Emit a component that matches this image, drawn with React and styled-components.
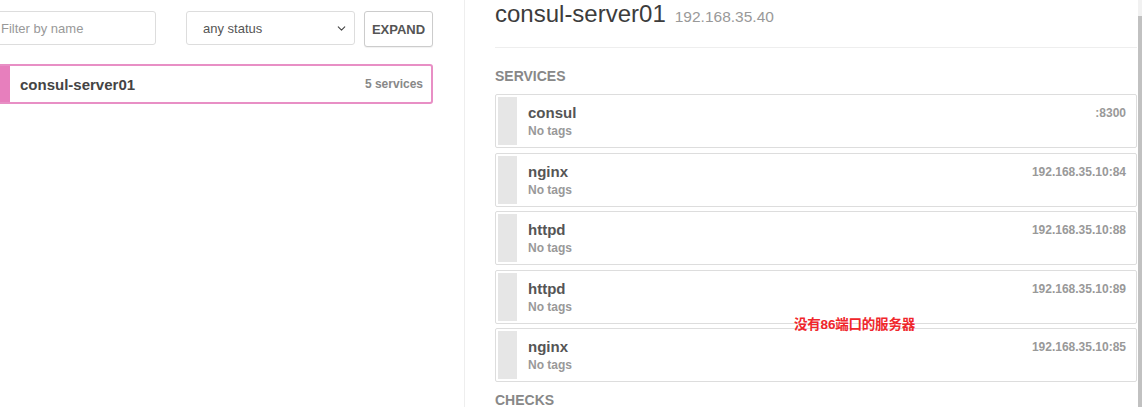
import styled, { createGlobalStyle } from 'styled-components';
import { ChevronDown } from 'lucide-react';

const GlobalStyle = createGlobalStyle`
  html, body {
    margin: 0;
    padding: 0;
    background: #fff;
    font-family: 'Liberation Sans', Arial, sans-serif;
    overflow: hidden;
  }
`;

const services = [
  { name: 'consul', address: ':8300' },
  { name: 'nginx', address: '192.168.35.10:84' },
  { name: 'httpd', address: '192.168.35.10:88' },
  { name: 'httpd', address: '192.168.35.10:89' },
  { name: 'nginx', address: '192.168.35.10:85' },
];

const Page = styled.div`
  display: flex;
  height: 407px;
  overflow: hidden;
`;

const LeftPanel = styled.div`
  width: 478px;
  flex-shrink: 0;
  margin-left: -13px;
  border-right: 1px solid #eee;
  box-sizing: border-box;
  padding: 11px 30px 0 0;
`;

const Toolbar = styled.div`
  display: grid;
  grid-template-columns: 169px 169px 69px;
  align-items: start;
  & > :nth-child(2) { margin-left: 30px; width: 169px; }
  & > :nth-child(3) { margin-left: 39px; }
`;

const FilterInput = styled.input`
  box-sizing: border-box;
  height: 34px;
  width: 169px;
  border: 1px solid #ddd;
  border-radius: 3px;
  padding: 0 13px;
  font-family: 'Liberation Sans', Arial, sans-serif;
  font-size: 13px;
  color: #555;
  &::placeholder { color: #999; }
`;

const SelectBox = styled.div`
  box-sizing: border-box;
  height: 34px;
  border: 1px solid #ddd;
  border-radius: 3px;
  display: flex;
  align-items: center;
  justify-content: space-between;
  padding: 0 6px 0 16px;
  font-size: 13px;
  color: #555;
`;

const ExpandButton = styled.button`
  box-sizing: border-box;
  height: 36px;
  width: 69px;
  border: 1px solid #ccc;
  border-radius: 3px;
  background: #fff;
  box-shadow: 0 1px 1px rgba(0, 0, 0, 0.06);
  font-family: 'Liberation Sans', Arial, sans-serif;
  font-weight: bold;
  font-size: 13px;
  color: #555;
  padding: 0;
`;

const NodeRow = styled.div`
  margin-top: 17px;
  width: 446px;
  height: 40px;
  box-sizing: border-box;
  border: 2px solid #e88fc5;
  border-radius: 3px;
  display: flex;
  align-items: center;
  overflow: hidden;
`;

const NodeBar = styled.div`
  align-self: stretch;
  width: 21px;
  background: #e77fbd;
  flex-shrink: 0;
`;

const NodeName = styled.div`
  flex: 1;
  padding-left: 10px;
  font-weight: bold;
  font-size: 15px;
  color: #444;
`;

const NodeCount = styled.div`
  padding-right: 8px;
  font-weight: bold;
  font-size: 12px;
  color: #888;
`;

const RightPanel = styled.div`
  flex: 1;
  padding-left: 30px;
  position: relative;
`;

const Header = styled.div`
  display: flex;
  align-items: baseline;
  gap: 9px;
  height: 48px;
  border-bottom: 1px solid #eee;
  box-sizing: border-box;
`;

const Title = styled.h1`
  margin: 0;
  font-weight: normal;
  font-size: 24px;
  line-height: 28px;
  color: #3c3c3c;
  letter-spacing: 0;
`;

const Address = styled.span`
  font-size: 15.5px;
  color: #999;
`;

const SectionTitle = styled.h3`
  margin: ${(p) => p.$top}px 0 10px;
  font-size: 14px;
  line-height: 16px;
  font-weight: bold;
  color: #888;
`;

const ServiceCard = styled.div`
  display: flex;
  height: 54px;
  box-sizing: border-box;
  border: 1px solid #ddd;
  border-radius: 2px;
  padding: 2px;
  margin-bottom: 4.5px;
`;

const ServiceBar = styled.div`
  width: 19px;
  background: #e6e6e6;
  flex-shrink: 0;
`;

const ServiceBody = styled.div`
  flex: 1;
  display: flex;
  flex-direction: column;
  padding: 7px 8px 0 11px;
`;

const ServiceTop = styled.div`
  display: flex;
  justify-content: space-between;
  align-items: center;
`;

const ServiceName = styled.div`
  font-weight: bold;
  font-size: 15px;
  line-height: 18px;
  color: #555;
`;

const ServiceAddress = styled.div`
  font-weight: bold;
  font-size: 12px;
  color: #999;
`;

const ServiceTags = styled.div`
  margin-top: 2px;
  font-weight: bold;
  font-size: 12px;
  line-height: 14px;
  color: #999;
`;

const Note = styled.div`
  position: absolute;
  left: 329px;
  top: 316px;
  font-family: 'Liberation Sans', 'Noto Sans CJK SC', sans-serif;
  font-weight: bold;
  font-size: 13.5px;
  line-height: 18px;
  color: #f0262b;
  letter-spacing: -0.2px;
`;

const Scrollbar = styled.div`
  width: 4px;
  flex-shrink: 0;
  display: flex;
  flex-direction: column;
  margin-left: 1px;
`;

const ScrollTrack = styled.div`
  height: 16px;
  background: #f1f1f1;
`;

const ScrollThumb = styled.div`
  flex: 1;
  background: #c1c1c1;
`;

export default function App() {
  return (
    <Page>
      <GlobalStyle />
      <LeftPanel>
        <Toolbar>
          <FilterInput placeholder="Filter by name" />
          <SelectBox>
            <span>any status</span>
            <ChevronDown size={13} strokeWidth={2} color="#444" />
          </SelectBox>
          <ExpandButton>EXPAND</ExpandButton>
        </Toolbar>
        <NodeRow>
          <NodeBar />
          <NodeName>consul-server01</NodeName>
          <NodeCount>5 services</NodeCount>
        </NodeRow>
      </LeftPanel>
      <RightPanel>
        <Header>
          <Title>consul-server01</Title>
          <Address>192.168.35.40</Address>
        </Header>
        <SectionTitle $top={20}>SERVICES</SectionTitle>
        {services.map((s, i) => (
          <ServiceCard key={i}>
            <ServiceBar />
            <ServiceBody>
              <ServiceTop>
                <ServiceName>{s.name}</ServiceName>
                <ServiceAddress>{s.address}</ServiceAddress>
              </ServiceTop>
              <ServiceTags>No tags</ServiceTags>
            </ServiceBody>
          </ServiceCard>
        ))}
        <SectionTitle $top={10}>CHECKS</SectionTitle>
        <Note>没有86端口的服务器</Note>
      </RightPanel>
      <Scrollbar>
        <ScrollTrack />
        <ScrollThumb />
      </Scrollbar>
    </Page>
  );
}
